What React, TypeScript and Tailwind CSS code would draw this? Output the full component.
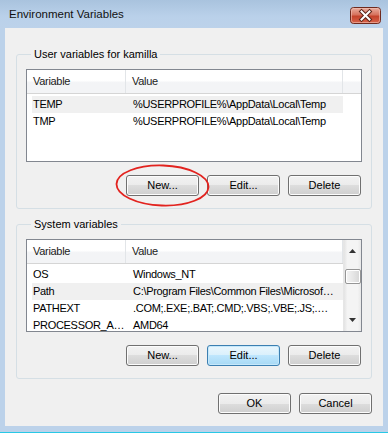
import React from "react";

type Row = { name: string; value: string; hot?: boolean };

const USER_ROWS: Row[] = [
  { name: "TEMP", value: "%USERPROFILE%\\AppData\\Local\\Temp", hot: true },
  { name: "TMP", value: "%USERPROFILE%\\AppData\\Local\\Temp" },
];

const SYSTEM_ROWS: Row[] = [
  { name: "OS", value: "Windows_NT" },
  { name: "Path", value: "C:\\Program Files\\Common Files\\Microsof…", hot: true },
  { name: "PATHEXT", value: ".COM;.EXE;.BAT;.CMD;.VBS;.VBE;.JS;.…" },
  { name: "PROCESSOR_A…", value: "AMD64" },
];

function CloseButton() {
  return (
    <svg width="31" height="17" viewBox="0 0 31 17" className="mt-[7px] self-start">
      <defs>
        <linearGradient id="cb" x1="0" y1="0" x2="0" y2="1">
          <stop offset="0" stopColor="#eab0a2" />
          <stop offset="0.45" stopColor="#d7735e" />
          <stop offset="0.55" stopColor="#c4432b" />
          <stop offset="1" stopColor="#d9654c" />
        </linearGradient>
      </defs>
      <rect x="0.5" y="0.5" width="30" height="16" rx="3" fill="url(#cb)" stroke="#6f2a1e" />
      <rect x="1.5" y="1.5" width="28" height="14" rx="2" fill="none" stroke="#f1c2b6" strokeOpacity="0.6" />
      <path d="M11.5 4.5 L19.5 12.5 M19.5 4.5 L11.5 12.5" stroke="#5a2418" strokeWidth="4" strokeLinecap="square" />
      <path d="M11.5 4.5 L19.5 12.5 M19.5 4.5 L11.5 12.5" stroke="#ffffff" strokeWidth="2" strokeLinecap="square" />
    </svg>
  );
}

function Button({ label, focused }: { label: string; focused?: boolean }) {
  return (
    <button
      className={
        "h-[21px] w-[73px] rounded-[3px] border text-[11px] leading-none text-black " +
        (focused
          ? "border-[#3c7fb1] bg-[linear-gradient(#eaf6fd_0%,#d9f0fc_50%,#bee6fd_50%,#a7d9f5_100%)] shadow-[inset_0_0_0_1px_#c5e8fb]"
          : "border-[#707070] bg-[linear-gradient(#f2f2f2_0%,#ebebeb_50%,#dddddd_50%,#cfcfcf_100%)] shadow-[inset_0_0_0_1px_#fcfcfc]")
      }
    >
      {label}
    </button>
  );
}

function Scrollbar() {
  return (
    <div className="flex w-[18px] flex-col items-center border-l border-[#e6e6e6] bg-[linear-gradient(90deg,#e3e3e3,#f4f4f4_20%,#f4f4f4_80%,#e8e8e8)]">
      <div className="flex h-[20px] w-full items-center justify-center pt-[2px]">
        <svg width="7" height="4" viewBox="0 0 7 4">
          <path d="M0 4 L3.5 0 L7 4 Z" fill="#333" />
        </svg>
      </div>
      <div className="mt-[9px] h-[15px] w-[16px] rounded-[2px] border border-[#959595] bg-[linear-gradient(90deg,#f4f4f4,#e6e6e6_50%,#d6d6d6)] shadow-[inset_0_0_0_1px_#ffffff]" />
      <div className="flex-1" />
      <div className="flex h-[20px] w-full items-center justify-center pb-[2px]">
        <svg width="7" height="4" viewBox="0 0 7 4">
          <path d="M0 0 L3.5 4 L7 0 Z" fill="#333" />
        </svg>
      </div>
    </div>
  );
}

function ListView({ rows, scroll }: { rows: Row[]; scroll?: boolean }) {
  return (
    <div className="flex h-[93px] w-[336px] overflow-hidden border border-[#828790] bg-white tracking-[-0.3px]">
      <div className="flex w-[316px] flex-col">
        <div className="flex h-[24px] shrink-0 border-b border-[#d5d5d5] bg-[linear-gradient(#ffffff_0%,#ffffff_45%,#f3f4f6_55%,#f3f4f6_100%)] text-[11px] text-[#222]">
          <div className="flex w-[99px] items-center border-r border-[#e2e5e8] pl-[6px]">Variable</div>
          <div className="flex w-[217px] items-center border-r border-[#e2e5e8] pl-[6px]">Value</div>
        </div>
        <div className="pt-[2px]">
          {rows.map((r) => (
            <div
              key={r.name}
              className={
                "ml-[5px] flex h-[17px] w-[311px] items-center text-[11px] text-black " +
                (r.hot ? "bg-[#f0f0f0]" : "")
              }
            >
              <div className="w-[94px] whitespace-nowrap pl-[1px]">{r.name}</div>
              <div className="whitespace-nowrap pl-[7px]">{r.value}</div>
            </div>
          ))}
        </div>
      </div>
      {scroll ? (
        <Scrollbar />
      ) : (
        <div className="h-[24px] flex-1 border-b border-[#d5d5d5] bg-[linear-gradient(#ffffff_0%,#ffffff_45%,#f3f4f6_55%,#f3f4f6_100%)]" />
      )}
    </div>
  );
}

function Group({
  title,
  rows,
  scroll,
  focusEdit,
  className,
}: {
  title: string;
  rows: Row[];
  scroll?: boolean;
  focusEdit?: boolean;
  className?: string;
}) {
  return (
    <fieldset className={"w-[356px] rounded-[3px] border border-[#d5dfe5] px-[9px] pb-[12px] " + (className ?? "")}>
      <legend className="ml-[5px] px-[3px] text-[11px] leading-[15px] text-black">{title}</legend>
      <div className="mt-[7px]">
        <ListView rows={rows} scroll={scroll} />
      </div>
      <div className="mt-[13px] flex justify-end gap-[8px] pr-[1px]">
        <Button label="New..." />
        <Button label="Edit..." focused={focusEdit} />
        <Button label="Delete" />
      </div>
    </fieldset>
  );
}

export default function App() {
  return (
    <div className="relative flex h-[433px] w-[388px] flex-col bg-[#bcd2ea] font-['Liberation_Sans',Arial,sans-serif]">
      <div className="flex h-[28px] justify-between bg-[linear-gradient(#a9c3de,#bad1ea_60%,#bcd2ea)] pl-[9px] pr-[7px]">
        <span className="self-center pt-[2px] text-[11.5px] text-[#111]">Environment Variables</span>
        <CloseButton />
      </div>

      <div className="mx-[5px] flex h-[398px] flex-col bg-[#f0f0f0] px-[11px] pt-[19px]">
        <Group title="User variables for kamilla" rows={USER_ROWS} />
        <Group title="System variables" rows={SYSTEM_ROWS} scroll focusEdit className="mt-[8px]" />
        <div className="mt-[14px] flex w-[356px] justify-end gap-[8px]">
          <Button label="OK" />
          <Button label="Cancel" />
        </div>
      </div>

      <div className="mt-auto h-[1px] bg-[#28c8e6]" />

      <svg className="pointer-events-none absolute left-[115px] top-[164px]" width="96" height="44" viewBox="0 0 96 44">
        <ellipse cx="47.5" cy="21.5" rx="46" ry="20" fill="none" stroke="#e2231f" strokeWidth="1.8" transform="rotate(2 47.5 21.5)" />
      </svg>
    </div>
  );
}
